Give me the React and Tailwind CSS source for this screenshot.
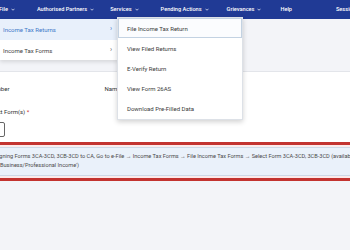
import React from "react";

const Chevron = ({ className = "" }) => (
  <svg viewBox="0 0 8 5" className={className} fill="none" stroke="currentColor" strokeWidth="1.4">
    <path d="M1 1l3 3 3-3" />
  </svg>
);

const navItems = [
  { label: "File", caret: true, ml: "ml-[-1px]" },
  { label: "Authorised Partners", caret: true, ml: "ml-[22px]" },
  { label: "Services", caret: true, ml: "ml-[16px]" },
  { label: "Pending Actions", caret: true, ml: "ml-[22px]" },
  { label: "Grievances", caret: true, ml: "ml-[18px]" },
  { label: "Help", caret: false, ml: "ml-[19px]" },
  { label: "Session", caret: false, ml: "ml-[44px]" },
];

const servicesMenu = [
  "View Filed Returns",
  "E-Verify Return",
  "View Form 26AS",
  "Download Pre-Filled Data",
];

export default function App() {
  return (
    <div className="relative w-[350px] h-[250px] overflow-hidden bg-[#f3f4f8] font-['Roboto',sans-serif]">
      {/* Top navigation */}
      <nav className="h-[19px] bg-[#203a95] flex items-center text-white text-[5.6px] font-medium whitespace-nowrap">
        {navItems.map((item) => (
          <div key={item.label} className={`flex shrink-0 items-center gap-[3px] ${item.ml}`}>
            <span>{item.label}</span>
            {item.caret && <Chevron className="w-[4px] h-[3px]" />}
          </div>
        ))}
      </nav>

      {/* Header strip behind menus */}
      <div className="h-[53px] border-b border-[#e3e5ea]" />

      {/* Form section */}
      <section className="h-[70px] bg-white text-[6px] text-[#333] pt-[12px]">
        <div className="flex">
          <span className="ml-[-12px]">Number</span>
          <span className="ml-[95px]">Name</span>
        </div>
        <div className="mt-[14px] ml-[-14px]">
          Select Form(s) <span className="text-[#c62828]">*</span>
        </div>
        <div className="mt-[6px] ml-[-20px] w-[25px] h-[15px] border border-[#666] rounded-[2px] bg-white" />
      </section>

      {/* Highlighted info box */}
      <div className="border-y-[3px] border-[#c3332f] bg-[#fbeaea] py-[2px]">
        <div className="h-[29px] bg-[#eaf1fa] border-y border-[#cdd8e6] text-[5.6px] text-[#4a4a4a] leading-[9px] pt-[4px] whitespace-nowrap">
          <div className="ml-[-2px]">
            igning Forms 3CA-3CD, 3CB-3CD to CA, Go to e-File → Income Tax Forms → File Income Tax Forms → Select Form 3CA-3CD, 3CB-3CD (available under
          </div>
          <div className="ml-[-1px]">'Business/Professional Income')</div>
        </div>
      </div>

      {/* File submenu */}
      <div className="absolute left-0 top-[19px] w-[118px] bg-white shadow-[0_2px_4px_rgba(0,0,0,0.12)] text-[6px]">
        <div className="h-[21px] flex items-center justify-between pl-[3px] pr-[6px] bg-[#e8f0fb] text-[#3f78c8]">
          <span>Income Tax Returns</span>
          <span className="text-[7px]">›</span>
        </div>
        <div className="h-[20px] flex items-center justify-between pl-[3px] pr-[6px] text-[#444]">
          <span>Income Tax Forms</span>
          <span className="text-[7px] text-[#666]">›</span>
        </div>
      </div>

      {/* Services dropdown */}
      <div className="absolute left-[117px] top-[17px] w-[126px] bg-white border border-[#dde1e7] shadow-[0_2px_5px_rgba(0,0,0,0.18)] text-[6px] text-[#3a3a3a] pb-[1px]">
        <div className="h-[20px] flex items-center pl-[8px] border border-[#c3d2e2] bg-[#fbfcfe]">
          File Income Tax Return
        </div>
        {servicesMenu.map((label) => (
          <div key={label} className="h-[20px] flex items-center pl-[9px]">
            {label}
          </div>
        ))}
      </div>
    </div>
  );
}
